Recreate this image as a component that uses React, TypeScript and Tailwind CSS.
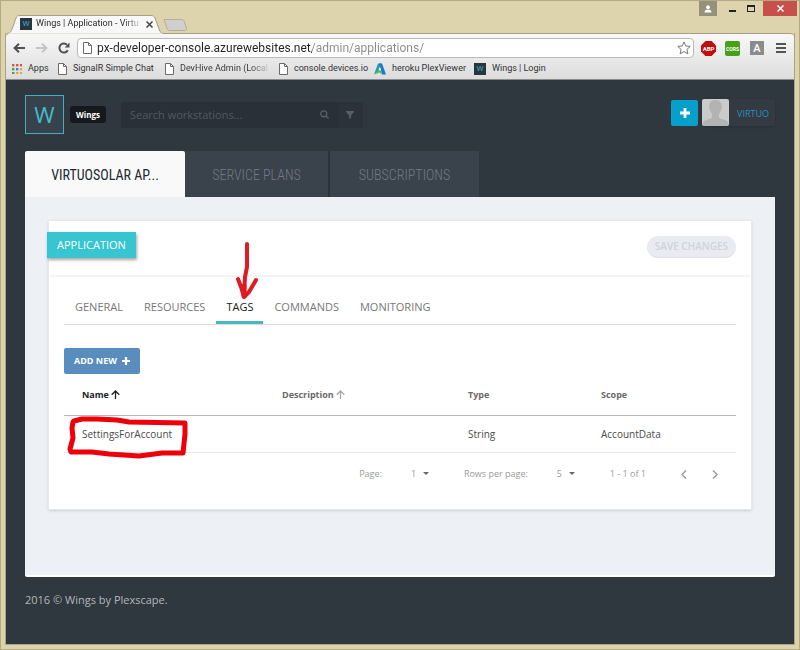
import type { ReactNode } from "react";

function PageIcon() {
  return (
    <svg viewBox="0 0 9 12" className="h-3 w-[9px] shrink-0" fill="#fff" stroke="#6b6b6b" strokeWidth="1">
      <path d="M.5.5h5l3 3v8h-8z" />
      <path d="M5.5.5v3h3" fill="none" />
    </svg>
  );
}

function AppsIcon() {
  const colors = ["#d9534a", "#d9534a", "#d9534a", "#4f9e4a", "#4a7bd0", "#e0a92e", "#4f9e4a", "#e0a92e", "#e0a92e"];
  return (
    <svg viewBox="0 0 10 10" className="size-[10px] shrink-0">
      {colors.map((c, i) => (
        <rect key={i} x={(i % 3) * 4} y={Math.floor(i / 3) * 4} width="2.4" height="2.4" fill={c} />
      ))}
    </svg>
  );
}

function PlexIcon() {
  return (
    <svg viewBox="0 0 12 12" className="size-3 shrink-0">
      <path d="M4 .6h3.600L4.400 8 0 11.400z" fill="#1fa3a8" />
      <path d="M5 .6h3L12 11.400H8.200z" fill="#1e78c8" />
      <path d="M0 11.400 4.400 7.200 7 7.600 8.200 11.400 5.600 9.400z" fill="#4cba5c" />
      <path d="M4.600 7 5.900 3.800 7 7.200z" fill="#e9eef0" />
    </svg>
  );
}

function WingsIcon() {
  return (
    <span className="flex size-3 shrink-0 items-center justify-center bg-[#263540] text-[8px] leading-none text-[#3fb2c4]">W</span>
  );
}

function PlusIcon({ className }: { className: string }) {
  return (
    <svg viewBox="0 0 10 10" className={className} fill="currentColor">
      <path d="M3.6 0h2.8v3.6H10v2.8H6.4V10H3.6V6.4H0V3.6h3.6z" />
    </svg>
  );
}

function SortArrow() {
  return (
    <svg viewBox="0 0 9 9" className="size-[9px] shrink-0" fill="none" stroke="currentColor" strokeWidth="1.3">
      <path d="M4.5 9V1M.7 4.8 4.5 1l3.8 3.8" />
    </svg>
  );
}

function Bookmark({ icon, children }: { icon: ReactNode; children: ReactNode }) {
  return (
    <a href="#" className="flex items-center gap-[6px] whitespace-nowrap">
      {icon}
      <span>{children}</span>
    </a>
  );
}

function TitleBar() {
  return (
    <header className="flex h-8 items-end justify-between pl-[2px]">
      <div className="flex items-end">
        <div className="relative h-[18px] w-[157px]">
          <svg viewBox="0 0 157 19" className="absolute left-0 top-0 h-[19px] w-full">
            <path d="M0 18.5C4 18 4 16 5.500 13L9 3C10 .8 11 .5 13 .5H144C146 .5 147 1 148 3L152 14C153 17 154 18.500 157 18.500" fill="#f8f8f8" stroke="#a79f80" />
            <path d="M1 19h155" stroke="#f8f8f8" />
          </svg>
          <div className="relative flex h-full items-center gap-1 pl-[13px] pr-[11px] font-[Roboto,'Open_Sans',sans-serif] text-[9px] text-[#222]">
            <WingsIcon />
            <span className="whitespace-nowrap bg-linear-to-r from-[#222] from-85% to-[#ccc] bg-clip-text text-transparent">
              Wings | Application - Virtu
            </span>
            <button aria-label="Close tab" className="ml-auto">
              <svg viewBox="0 0 7 7" className="size-[7px]" stroke="#444" strokeWidth="1.500">
                <path d="M.5.5l6 6M6.500.5l-6 6" />
              </svg>
            </button>
          </div>
        </div>
        <button aria-label="New tab" className="mb-[2px] -ml-[1px]">
          <svg viewBox="0 0 24 12" className="h-3 w-6" fill="#cfcfcf" stroke="#b5ae90">
            <path d="M1 .5h18c1 0 1.500.3 2 1.500l2.500 7.500c.3 1.300 0 2-1 2H6.500c-1 0-1.800-.4-2.200-1.500z" />
          </svg>
        </button>
      </div>
      <div className="flex self-start">
        <button aria-label="Profile" className="flex h-[15px] w-[18px] items-center justify-center bg-[#95917a] text-white">
          <svg viewBox="0 0 8 8" className="size-2" fill="currentColor">
            <circle cx="4" cy="2.200" r="1.900" />
            <path d="M.5 7.600c0-2 1.200-3 3.500-3s3.500 1 3.500 3z" />
          </svg>
        </button>
        <button aria-label="Minimize" className="flex h-[15px] w-[30px] items-center justify-center pt-1">
          <span className="h-[2px] w-[7px] bg-[#222]" />
        </button>
        <button aria-label="Maximize" className="flex h-[15px] w-4 items-center justify-start">
          <span className="h-[7px] w-2 border border-t-2 border-[#222]" />
        </button>
        <button aria-label="Close window" className="-mr-[2px] flex h-[15px] w-[34px] items-center justify-center bg-[#c7504c]">
          <svg viewBox="0 0 7 7" className="size-[7px]" stroke="#fff" strokeWidth="1.500">
            <path d="M.5.5l6 6M6.500.5l-6 6" />
          </svg>
        </button>
      </div>
    </header>
  );
}

function Toolbar() {
  return (
    <div className="rounded-t-sm border-t border-[#a79f80] bg-linear-to-b from-[#f8f8f8] to-[#dcdcdd] font-[Roboto,'Open_Sans',sans-serif]">
      <div className="flex h-[28px] items-center pl-[7px] pr-2">
        <button aria-label="Back" className="mr-[11px]">
          <svg viewBox="0 0 12 10" className="h-[10px] w-3" fill="none" stroke="#505050" strokeWidth="2">
            <path d="M12 5H2M6 .8 1.600 5 6 9.200" />
          </svg>
        </button>
        <button aria-label="Forward" className="mr-[10px]">
          <svg viewBox="0 0 12 10" className="h-[10px] w-3" fill="none" stroke="#c4c4c4" strokeWidth="2">
            <path d="M0 5h10M6 .8 10.400 5 6 9.200" />
          </svg>
        </button>
        <button aria-label="Reload" className="mr-[7px]">
          <svg viewBox="0 0 12 12" className="size-3" fill="none" stroke="#505050" strokeWidth="2">
            <path d="M9.800 8.300A4.500 4.500 0 1 1 9 2.800" />
            <path d="M11.500.6V5.400H6.700z" fill="#505050" stroke="none" />
          </svg>
        </button>
        <div className="flex h-5 flex-1 items-center gap-[5px] rounded-sm border border-[#b9b9b9] bg-white pl-[5px] pr-[2px]">
          <PageIcon />
          <input
            aria-label="Address"
            defaultValue="px-developer-console.azurewebsites.net/admin/applications/"
            className="min-w-0 flex-1 bg-linear-to-r from-[#222] from-[215px] to-[#8a8a8a] to-[215px] bg-clip-text text-xs text-transparent outline-none"
          />
          <button aria-label="Bookmark this page">
            <svg viewBox="0 0 14 14" className="size-[14px]" fill="#fff" stroke="#777">
              <path d="M7 .9 8.800 5l4.500.4-3.400 3 1 4.500L7 10.500l-3.900 2.400 1-4.500-3.400-3L5.200 5z" />
            </svg>
          </button>
        </div>
        <button aria-label="Adblock" className="ml-[7px]">
          <svg viewBox="0 0 15 15" className="size-[15px]">
            <path d="M4.400 0h6.200L15 4.400v6.200L10.600 15H4.400L0 10.600V4.400z" fill="#c00d0d" />
            <text x="7.500" y="10" textAnchor="middle" fontSize="6" fontWeight="bold" fill="#fff">ABP</text>
          </svg>
        </button>
        <button aria-label="CORS" className="ml-[9px]">
          <svg viewBox="0 0 15 15" className="size-[15px]">
            <rect width="15" height="15" rx="2" fill="#46a018" />
            <text x="7.500" y="9.500" textAnchor="middle" fontSize="5" fontWeight="bold" fill="#fff">CORS</text>
          </svg>
        </button>
        <button className="ml-[10px] flex size-[14px] items-center justify-center bg-[#8b8b8b] text-[11px] font-medium leading-none text-white">A</button>
        <button aria-label="Menu" className="ml-3 flex w-[10px] flex-col gap-[2px]">
          <span className="h-[2px] w-full bg-[#555]" />
          <span className="h-[2px] w-full bg-[#555]" />
          <span className="h-[2px] w-full bg-[#555]" />
        </button>
      </div>
      <nav aria-label="Bookmarks" className="flex h-[18px] items-center border-b border-[#8c8c8c] pl-[6px] pb-1 text-[9px] text-[#333]">
        <div className="w-[46px]"><Bookmark icon={<AppsIcon />}>Apps</Bookmark></div>
        <div className="w-[107px]"><Bookmark icon={<PageIcon />}>SignalR Simple Chat</Bookmark></div>
        <div className="w-[114px]">
          <Bookmark icon={<PageIcon />}>
            <span className="block bg-linear-to-r from-[#333] from-80% to-[#ccc] bg-clip-text text-transparent">DevHive Admin (Local</span>
          </Bookmark>
        </div>
        <div className="w-[95px]"><Bookmark icon={<PageIcon />}>console.devices.io</Bookmark></div>
        <div className="w-[100px]"><Bookmark icon={<PlexIcon />}>heroku PlexViewer</Bookmark></div>
        <Bookmark icon={<WingsIcon />}>Wings | Login</Bookmark>
      </nav>
    </div>
  );
}

function AppHeader() {
  return (
    <div className="flex items-center">
      <a href="#" className="flex size-[39px] items-center justify-center border border-[#3fb2bf] bg-[#37424d] pb-[2px] text-[22px] leading-none text-[#45bccb]">W</a>
      <span className="ml-[6px] rounded-[3px] bg-[#15191d] px-[6px] py-[3px] text-[8px] font-bold leading-[11px] text-white">Wings</span>
      <form className="ml-[15px] flex h-[26px] w-[242px] bg-[#2a3037] text-[#56606a]">
        <input
          type="search"
          aria-label="Search workstations"
          placeholder="Search workstations..."
          className="min-w-0 flex-1 pl-[9px] pt-[2px] text-[11px] outline-none placeholder:text-[#505a63]"
        />
        <button type="button" aria-label="Search" className="flex w-[26px] items-center justify-center">
          <svg viewBox="0 0 10 10" className="size-[9px]" fill="none" stroke="currentColor" strokeWidth="1.400">
            <circle cx="4.200" cy="4.200" r="3.300" />
            <path d="M6.600 6.600 9.500 9.500" />
          </svg>
        </button>
        <button type="button" aria-label="Filter" className="flex w-[25px] items-center justify-center bg-[#2c3239]">
          <svg viewBox="0 0 8 8" className="size-2" fill="currentColor">
            <path d="M0 0h8v1L5 4.200V8L3 6.600V4.200L0 1z" />
          </svg>
        </button>
      </form>
      <button aria-label="Add" className="mb-1 ml-auto flex h-[26px] w-[27px] items-center justify-center rounded-[2px] bg-[#06a0cb] text-white">
        <PlusIcon className="size-[10px]" />
      </button>
      <button className="mb-1 ml-1 flex h-[27px] items-center rounded-[2px] bg-[#333a42] text-[9px] text-[#2b8fc0] shadow">
        <svg viewBox="0 0 27 27" className="size-[27px] rounded-[2px]">
          <rect width="27" height="27" fill="#cbcbcb" />
          <path d="M13.500 1C9 1 7 4 7.200 8c.2 3 1.300 4.500 2.500 6.500.6 1.300.7 3.500-.2 4.500-1.500 1.200-7 1.500-8.500 4V27h25v-4c-1.500-2.500-7-2.800-8.500-4-.9-1-.8-3.200-.2-4.500 1.200-2 2.300-3.500 2.500-6.500C20 4 18 1 13.500 1z" fill="#b3b3b3" />
        </svg>
        <span className="pl-2 pr-[6px] pt-[2px]">VIRTUO</span>
      </button>
    </div>
  );
}

function MainTabs() {
  const base = "flex h-[46px] items-center justify-center pt-[2px]";
  return (
    <nav aria-label="Sections" className="mt-[17px] flex font-['Roboto_Condensed',sans-serif] text-sm">
      <button className={`${base} w-40 rounded-t-[2px] bg-[#f9f9f9] text-[#22292f]`}>VIRTUOSOLAR AP...</button>
      <button className={`${base} w-[145px] border-r-2 border-[#2b3238] bg-[#3a424c] font-light text-[#727b85]`}>SERVICE PLANS</button>
      <button className={`${base} w-[149px] bg-[#3a424c] font-light text-[#727b85]`}>SUBSCRIPTIONS</button>
    </nav>
  );
}

function DetailTabs() {
  const tabs = ["GENERAL", "RESOURCES", "TAGS", "COMMANDS", "MONITORING"];
  return (
    <div role="tablist" className="flex gap-px border-b border-[#dcdcdc] pl-px text-[11px] text-[#777]">
      {tabs.map((t) => {
        const on = t === "TAGS";
        return (
          <button
            key={t}
            role="tab"
            aria-selected={on}
            className={on ? "relative border-b-[3px] border-[#45b8c4] px-[10px] pb-[5px] text-[#222]" : "border-b-[3px] border-transparent px-[10px] pb-[5px]"}
          >
            {t}
            {on && (
              <svg viewBox="0 0 24 60" className="pointer-events-none absolute -top-[58px] left-[19px] h-[60px] w-6" fill="none" stroke="#e01b24" strokeWidth="4" strokeLinecap="round" strokeLinejoin="round">
                <path d="M12 3 12 26 10 36 9 55" />
                <path d="M3 38 6 46 9 56 14 51 21 39" />
                <path d="M9 45v10" strokeWidth="5" />
              </svg>
            )}
          </button>
        );
      })}
    </div>
  );
}

function TagTable() {
  return (
    <table className="mt-px w-full table-fixed text-left">
      <thead>
        <tr className="h-[41px] border-b border-[#b8b8b8] text-[9px] text-[#6a6a6a]">
          <th aria-sort="ascending" className="w-[218px] pl-[18px] text-[#222]"><span className="flex items-center gap-[2px]">Name<SortArrow /></span></th>
          <th className="w-[186px]"><span className="flex items-center gap-[2px]">Description<span className="text-[#a8a8a8]"><SortArrow /></span></span></th>
          <th className="w-[133px]">Type</th>
          <th>Scope</th>
        </tr>
      </thead>
      <tbody>
        <tr className="h-[37px] border-b border-[#e6e6e6] text-[10px] text-[#4a4a4a]">
          <td className="relative pl-[18px]">
            SettingsForAccount
            <svg viewBox="0 0 122 43" className="pointer-events-none absolute left-[3px] top-0 h-[43px] w-[122px]" fill="none" stroke="#ed0009" strokeWidth="5" strokeLinecap="round" strokeLinejoin="round">
              <path d="M7 5 15 3 30 3 50 4 62 6 118 7 118 18 116 37 95 37 72 40 42 38 25 36 4 36 3 33 6 22 5 12 6 6" />
            </svg>
          </td>
          <td></td>
          <td>String</td>
          <td>AccountData</td>
        </tr>
      </tbody>
    </table>
  );
}

function PageSelect({ label, value }: { label: string; value: string }) {
  return (
    <label className="flex items-center">
      {label}
      <span className="relative ml-[29px] flex items-center">
        <select defaultValue={value} className="w-[18px] appearance-none text-[9px] outline-none">
          <option>{value}</option>
        </select>
        <svg viewBox="0 0 6 3" className="pointer-events-none absolute right-0 h-[3px] w-[6px]" fill="#666"><path d="M0 0h6L3 3z" /></svg>
      </span>
    </label>
  );
}

function Pagination() {
  return (
    <div className="flex h-[41px] items-center justify-end gap-[35px] pr-[18px] text-[9px] text-[#999]">
      <PageSelect label="Page:" value="1" />
      <PageSelect label="Rows per page:" value="5" />
      <span>1 - 1 of 1</span>
      <div className="flex gap-[25px]">
        <button aria-label="Previous page" className="pt-[2px]">
          <svg viewBox="0 0 6 9" className="h-[9px] w-[6px]" fill="none" stroke="currentColor" strokeWidth="1.400"><path d="M5 .5 1 4.500l4 4" /></svg>
        </button>
        <button aria-label="Next page" className="pt-[2px]">
          <svg viewBox="0 0 6 9" className="h-[9px] w-[6px]" fill="none" stroke="currentColor" strokeWidth="1.400"><path d="M1 .5l4 4-4 4" /></svg>
        </button>
      </div>
    </div>
  );
}

export default function App() {
  return (
    <div className="flex min-h-screen flex-col border border-[#b3aa82] bg-[#ddd4ad] px-1 pb-1 font-['Open_Sans','Noto_Sans',sans-serif]">
      <TitleBar />
      <div className="flex flex-1 flex-col border border-t-0 border-[#a9a388]">
        <Toolbar />
        <div className="flex-1 bg-[#2f373f] px-[19px] pt-[15px]">
          <AppHeader />
          <MainTabs />
          <main className="rounded-b-[2px] border-b-2 border-white bg-[#edf0f5] px-[23px] pb-[65px] pt-[23px]">
            <section className="border border-[#e6e9ee] bg-white pb-[15px] shadow-sm">
              <div className="flex h-[56px] items-center justify-between border-b-2 border-[#f4f4f5] pb-[2px] pr-[15px]">
                <h1 className="-ml-[2px] mb-[5px] bg-[#36c5d1] px-[10px] py-[5px] text-[11px] leading-4 text-white shadow-[1px_2px_3px_rgba(0,0,0,0.35)]">APPLICATION</h1>
                <button disabled className="h-[22px] rounded-full border-b border-[#dfe1e7] bg-[#e9ebf0] px-2 text-[10px] font-semibold text-[#cfd3da]">SAVE CHANGES</button>
              </div>
              <div className="px-[15px] pt-[22px]">
                <DetailTabs />
                <button className="mt-[23px] flex h-[26px] items-center gap-[5px] rounded-[2px] bg-[#588dbd] px-[10px] text-[9px] font-bold text-white">
                  ADD NEW <PlusIcon className="size-2" />
                </button>
                <TagTable />
                <Pagination />
              </div>
            </section>
          </main>
          <footer className="py-[15px] text-[11px] leading-4 text-[#b4b8bc]">2016 © Wings by Plexscape.</footer>
        </div>
      </div>
    </div>
  );
}
